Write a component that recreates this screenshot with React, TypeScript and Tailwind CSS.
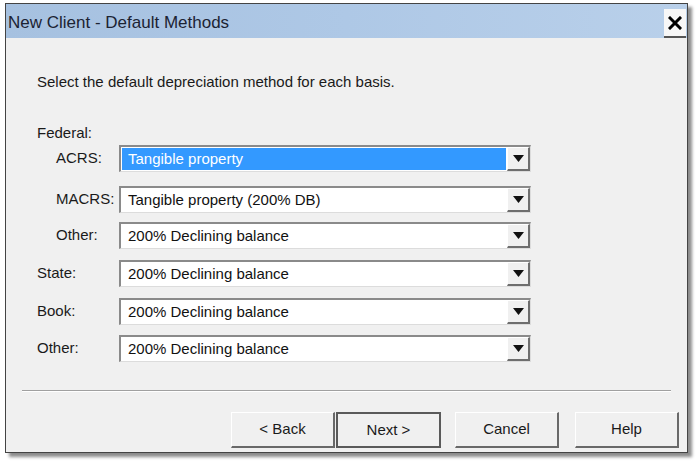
import React from "react";

type Row = { label: string; value: string; indent?: boolean; selected?: boolean; mt: string };

const rows: Row[] = [
  { label: "ACRS:", value: "Tangible property", indent: true, selected: true, mt: "mt-[1px]" },
  { label: "MACRS:", value: "Tangible property (200% DB)", indent: true, mt: "mt-[14px]" },
  { label: "Other:", value: "200% Declining balance", indent: true, mt: "mt-[9px]" },
  { label: "State:", value: "200% Declining balance", mt: "mt-[11px]" },
  { label: "Book:", value: "200% Declining balance", mt: "mt-[11px]" },
  { label: "Other:", value: "200% Declining balance", mt: "mt-[10px]" },
];

function Combo({ value, selected }: { value: string; selected?: boolean }) {
  return (
    <div className="flex h-[27px] w-[412px] border-t-2 border-l-2 border-t-[#8a8a8a] border-l-[#8a8a8a] border-r border-b border-r-[#dcdcdc] border-b-[#dcdcdc] bg-white">
      <div className="flex flex-1 items-center p-[1px]">
        <div
          className={
            selected
              ? "flex h-full w-full items-center bg-[#3399ff] pl-[6px] text-white"
              : "flex h-full w-full items-center pl-[6px] text-[#111]"
          }
        >
          {value}
        </div>
      </div>
      <div className="flex w-[23px] items-center justify-center border-t border-l border-t-white border-l-white border-r-2 border-b-2 border-r-[#6e6e6e] border-b-[#6e6e6e] bg-[#f0f0f0]">
        <svg width="11" height="7" viewBox="0 0 11 7">
          <path d="M0 0 H11 L5.5 7 Z" fill="#111" />
        </svg>
      </div>
    </div>
  );
}

function Button({ label, focused }: { label: string; focused?: boolean }) {
  return (
    <div
      className={
        focused
          ? "flex h-[36px] w-[105px] items-center justify-center border-2 border-[#5a5a5a] bg-[#f0f0f0]"
          : "flex h-[36px] w-[104px] items-center justify-center border-t border-l border-t-white border-l-white border-r-2 border-b-2 border-r-[#696969] border-b-[#696969] bg-[#f0f0f0]"
      }
    >
      {label}
    </div>
  );
}

export default function App() {
  return (
    <div
      className="h-[463px] w-[700px] bg-white pt-[3px] pl-[5px] text-[15px] text-[#1a1a1a]"
      style={{ fontFamily: '"Liberation Sans", Arial, sans-serif' }}
    >
      <div className="flex h-[450px] w-[683px] flex-col border border-[#444] bg-[#f0f0f0] shadow-[4px_4px_3px_rgba(0,0,0,0.45)]">
        <div className="flex h-[34px] items-center justify-between bg-gradient-to-r from-[#a6c1e0] via-[#aec8e6] to-[#b9d0ea] pl-[2px] pr-[1px]">
          <span className="pt-[3px] text-[17px] text-[#1c2333]">New Client - Default Methods</span>
          <div className="flex h-[29px] w-[22px] items-center justify-center self-end border-b-2 border-b-[#555] bg-[#f7f7f7]">
            <svg width="14" height="14" viewBox="0 0 14 14">
              <path d="M2 2 L12 12 M12 2 L2 12" stroke="#000" strokeWidth="3" strokeLinecap="square" />
            </svg>
          </div>
        </div>

        <div className="flex flex-1 flex-col pl-[31px]">
          <div className="mt-[33px]">Select the default depreciation method for each basis.</div>
          <div className="mt-[28px]">Federal:</div>
          {rows.map((r, i) => (
            <div key={i} className={"flex items-center " + r.mt}>
              <div className={r.indent ? "w-[82px] pl-[19px]" : "w-[82px]"}>{r.label}</div>
              <Combo value={r.value} selected={r.selected} />
            </div>
          ))}
        </div>

        <div className="mx-[16px] h-[2px] border-t border-t-[#a0a0a0] border-b border-b-white" />
        <div className="flex h-[60px] items-end pl-[225px] pb-[4px]">
          <Button label="< Back" />
          <div className="ml-[1px]">
            <Button label="Next >" focused />
          </div>
          <div className="ml-[14px]">
            <Button label="Cancel" />
          </div>
          <div className="ml-[16px]">
            <Button label="Help" />
          </div>
        </div>
      </div>
    </div>
  );
}
